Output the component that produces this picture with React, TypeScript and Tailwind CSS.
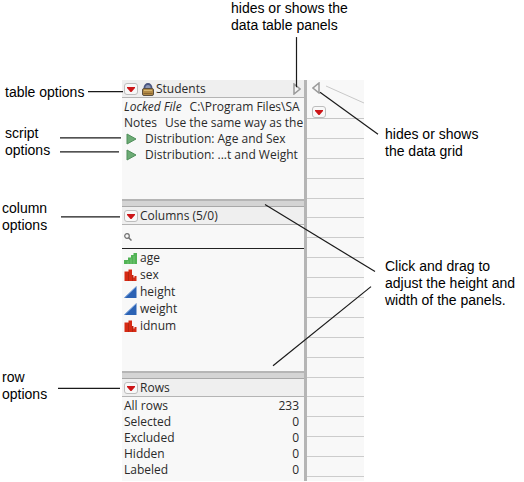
import type { ReactNode } from "react";

type ColumnKind = "ordinal" | "nominal" | "continuous";

const scripts = ["Distribution: Age and Sex", "Distribution: ...t and Weight"];

const columns: { name: string; kind: ColumnKind }[] = [
  { name: "age", kind: "ordinal" },
  { name: "sex", kind: "nominal" },
  { name: "height", kind: "continuous" },
  { name: "weight", kind: "continuous" },
  { name: "idnum", kind: "nominal" },
];

const rowCounts = [
  { label: "All rows", value: 233 },
  { label: "Selected", value: 0 },
  { label: "Excluded", value: 0 },
  { label: "Hidden", value: 0 },
  { label: "Labeled", value: 0 },
];

// Leader lines from the callouts, drawn over the whole figure
const leaders = [
  [296.5, 37, 296.5, 87],
  [88, 91.5, 123, 91.5],
  [60, 137.5, 121, 137.5],
  [60, 151.5, 119, 151.5],
  [61, 216.5, 120, 216.5],
  [58, 387.5, 120, 387.5],
  [320, 92, 378, 134],
  [265, 204, 375, 271],
  [273, 365, 371, 286],
];

function MenuButton({ label }: { label: string }) {
  return (
    <button
      type="button"
      title={label}
      aria-label={label}
      className="flex h-3 w-3.5 shrink-0 items-center justify-center rounded-[3px] border border-[#bdbdbd] bg-[#f8f8f8]"
    >
      <svg width="8" height="5" viewBox="0 0 8 5">
        <path d="M0 0h8v1L4.500 5h-1L0 1z" fill="#cc1518" />
      </svg>
    </button>
  );
}

function LockIcon() {
  return (
    <svg width="12" height="13" viewBox="0 0 12 13" className="shrink-0">
      <path d="M2.500 7V4.500a3.500 3.500 0 0 1 7 0V7" fill="#8d97b5" stroke="#4a5680" strokeWidth="1.800" />
      <rect x="0.5" y="5.500" width="11" height="7" rx="1.500" fill="#b28a45" stroke="#5c5040" />
      <path d="M2 7.500h8" stroke="#d9b873" />
      <path d="M1.500 10.500h9" stroke="#8a6630" />
    </svg>
  );
}

function ColumnIcon({ kind }: { kind: ColumnKind }) {
  return (
    <svg width="13" height="12" viewBox="0 0 13 12" className="shrink-0">
      {kind === "ordinal" && (
        <>
          <path d="M0 12V8h4V5.500h3V3h2.500V1H13v11z" fill="#52b356" />
          <path d="M4 9v3M7 6.500V12M10 4v8" stroke="#7ccb7f" strokeWidth="0.800" />
        </>
      )}
      {kind === "nominal" && (
        <>
          <path d="M0.500 12V2.500h4V0.500H8V6h1.500v2.500h1V7h2v5z" fill="#d62a14" />
          <path d="M4.500 3v9M8.500 6v6" stroke="#ab2412" strokeWidth="0.800" />
        </>
      )}
      {kind === "continuous" && (
        <>
          <path d="M0 12L12.500 0v12z" fill="#2b62b4" />
          <path d="M1 11.500L12 1" stroke="#6f9bd8" />
        </>
      )}
    </svg>
  );
}

function PanelHeader({ children }: { children: ReactNode }) {
  return (
    <div className="flex h-[18px] items-center border-b border-[#b4b4b4] bg-[#efefef] pt-px pl-0.5 leading-4">
      {children}
    </div>
  );
}

function Splitter() {
  return (
    <div
      role="separator"
      aria-orientation="horizontal"
      className="h-2 cursor-row-resize border-t-2 border-b border-t-[#b5b5b5] border-b-[#a8a8a8] bg-[#d4d4d4]"
    />
  );
}

function SidePanels() {
  return (
    <div className="flex min-w-0 flex-1 flex-col text-[12px]">
      <section className="min-h-[119px]">
        <PanelHeader>
          <MenuButton label="Table options" />
          <span className="ml-1">
            <LockIcon />
          </span>
          <h2 className="ml-0.5 flex-1">Students</h2>
          <button type="button" aria-label="Hide or show the data table panels" className="mr-[3px]">
            <svg width="8" height="12" viewBox="0 0 8 12">
              <path d="M1 1v10l6-5z" fill="#f4f4f4" stroke="#9a9a9a" strokeWidth="1.500" />
            </svg>
          </button>
        </PanelHeader>
        <div className="overflow-hidden pt-px pl-0.5 leading-4 whitespace-nowrap">
          <p>
            <em>Locked File</em>
            <span className="ml-2">C:\Program Files\SA</span>
          </p>
          <p>
            Notes<span className="ml-2">Use the same way as the</span>
          </p>
          {scripts.map((name) => (
            <button key={name} type="button" className="flex items-center pl-0.5">
              <svg width="11" height="12" viewBox="0 0 11 12">
                <path d="M1 1v10l9-5z" fill="#6cab75" stroke="#4f8f5a" />
              </svg>
              <span className="ml-2">{name}</span>
            </button>
          ))}
        </div>
      </section>
      <Splitter />
      <section className="min-h-[164px]">
        <PanelHeader>
          <MenuButton label="Column options" />
          <h2 className="ml-0.5">Columns (5/0)</h2>
        </PanelHeader>
        <label className="flex h-6 items-center border-b border-[#222222] pl-0.5">
          <svg width="8" height="8" viewBox="0 0 8 8" fill="none" stroke="#707070">
            <circle cx="3" cy="3" r="2.300" strokeWidth="1.200" />
            <path d="M4.700 4.700L7.500 7.500" strokeWidth="1.500" />
          </svg>
          <input type="text" aria-label="Filter columns" className="min-w-0 flex-1 bg-transparent px-1 text-xs outline-none" />
        </label>
        <ul className="leading-[17px]">
          {columns.map((col) => (
            <li key={col.name} className="flex items-center pl-0.5">
              <ColumnIcon kind={col.kind} />
              <span className="ml-[3px]">{col.name}</span>
            </li>
          ))}
        </ul>
      </section>
      <Splitter />
      <section className="pb-[3px]">
        <PanelHeader>
          <MenuButton label="Row options" />
          <h2 className="ml-0.5">Rows</h2>
        </PanelHeader>
        <table className="mt-px w-full leading-4">
          <tbody>
            {rowCounts.map((row) => (
              <tr key={row.label}>
                <th scope="row" className="pl-0.5 text-left font-normal">
                  {row.label}
                </th>
                <td className="pr-[5px] text-right">{row.value}</td>
              </tr>
            ))}
          </tbody>
        </table>
      </section>
    </div>
  );
}

function DataGrid() {
  return (
    <div className="flex w-[57px] shrink-0 flex-col pb-1">
      <div className="flex h-[39px] flex-col justify-between border-b border-[#c6c6c6] pl-[5px]">
        <div className="flex items-start">
          <button type="button" aria-label="Hide or show the data grid" className="mt-0.5">
            <svg width="8" height="12" viewBox="0 0 8 12">
              <path d="M7 1v10L1 6z" fill="#f4f4f4" stroke="#9a9a9a" strokeWidth="1.500" />
            </svg>
          </button>
          <svg height="24" viewBox="0 0 38 24" className="ml-1.5 flex-1">
            <path d="M0 6l38 17" stroke="#c8c8c8" />
          </svg>
        </div>
        <MenuButton label="Grid options" />
      </div>
      {Array.from({ length: 18 }, (_, i) => (
        <div key={i} className="flex-1 border-b border-[#cccccc]" />
      ))}
    </div>
  );
}

function Callout({ lines, className }: { lines: string[]; className?: string }) {
  return (
    <p className={className}>
      {lines.map((line) => (
        <span key={line} className="block">
          {line}
        </span>
      ))}
    </p>
  );
}

export default function App() {
  return (
    <main className="relative bg-white pb-0.5 font-['Liberation_Sans',Arial,sans-serif] text-[14px] leading-[17px] whitespace-nowrap text-black">
      <div className="h-20 pl-[231px]">
        <Callout lines={["hides or shows the", "data table panels"]} />
      </div>
      <div className="grid grid-cols-[122px_minmax(0,1fr)_160px]">
        <div className="pl-0.5">
          <Callout className="mt-1 ml-[3px]" lines={["table options"]} />
          <Callout className="mt-6 ml-[3px]" lines={["script", "options"]} />
          <Callout className="mt-[41px]" lines={["column", "options"]} />
          <Callout className="mt-[135px]" lines={["row", "options"]} />
        </div>
        <div className="flex bg-[#f8f8f8] font-['Open_Sans','Noto_Sans',sans-serif] text-[#2a2a2a]">
          <SidePanels />
          <div role="separator" aria-orientation="vertical" className="w-[3px] cursor-col-resize bg-[#b5b5b5]" />
          <DataGrid />
        </div>
        <div className="pl-[21px]">
          <Callout className="mt-[46px]" lines={["hides or shows", "the data grid"]} />
          <Callout className="mt-[98px]" lines={["Click and drag to", "adjust the height and", "width of the panels."]} />
        </div>
      </div>
      <svg
        viewBox="0 0 524 482"
        preserveAspectRatio="none"
        className="pointer-events-none absolute inset-0 h-full w-full"
        aria-hidden="true"
      >
        {leaders.map(([x1, y1, x2, y2]) => (
          <line key={`${x1}-${y1}`} x1={x1} y1={y1} x2={x2} y2={y2} stroke="#1a1a1a" strokeWidth="1.200" />
        ))}
      </svg>
    </main>
  );
}
